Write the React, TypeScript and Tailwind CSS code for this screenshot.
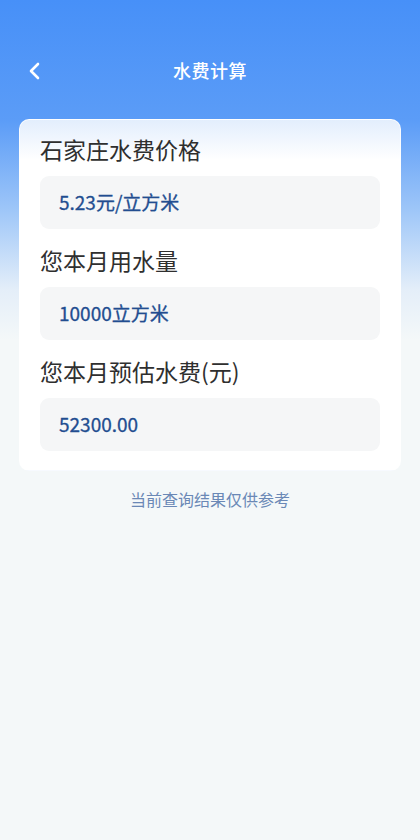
import React from 'react';

const fields = [
  { label: '石家庄水费价格', value: '5.23元/立方米' },
  { label: '您本月用水量', value: '10000立方米' },
  { label: '您本月预估水费(元)', value: '52300.00' },
];

const App: React.FC = () => {
  return (
    <div
      className="min-h-[840px] w-full bg-[linear-gradient(180deg,#4790f8_0px,#5b9cf7_120px,#9ec6f8_210px,#e4eef9_290px,#f4f8f9_340px,#f4f8f9_100%)]"
      style={{ fontFamily: '"Noto Sans CJK SC", "Noto Sans", sans-serif' }}
    >
      {/* Header */}
      <div className="pt-[44px]">
        <div className="relative h-[52px] flex items-center justify-center">
          <button className="absolute left-[24px] top-[14px] p-1">
            <svg width="14" height="18" viewBox="0 0 14 18" fill="none">
              <path d="M10 2 L3 9 L10 16" stroke="white" strokeWidth="2.6" strokeLinecap="round" strokeLinejoin="round" />
            </svg>
          </button>
          <h1 className="text-[18px] font-medium text-white tracking-[0.5px]">水费计算</h1>
        </div>
      </div>

      {/* Card */}
      <div className="mx-[19px] mt-[23px] rounded-[10px] border border-white/70 bg-[linear-gradient(180deg,#e3eefd_0px,#ffffff_40px,#ffffff_100%)] px-[20px] pt-[13px] pb-[19px]">
        {fields.map((f, i) => (
          <div key={f.label} className={i > 0 ? 'mt-[15px]' : ''}>
            <div className="text-[23px] leading-[32px] text-[#2f2f2f]">{f.label}</div>
            <div className="mt-[11px] h-[53px] rounded-[9px] bg-[#f5f6f7] flex items-center px-[19px]">
              <span className="text-[19px] text-[#224d90] [-webkit-text-stroke:0.3px_#224d90]">{f.value}</span>
            </div>
          </div>
        ))}
      </div>

      {/* Note */}
      <p className="mt-[16px] text-center text-[16px] text-[#6a88b6]">当前查询结果仅供参考</p>
    </div>
  );
};

export default App;
